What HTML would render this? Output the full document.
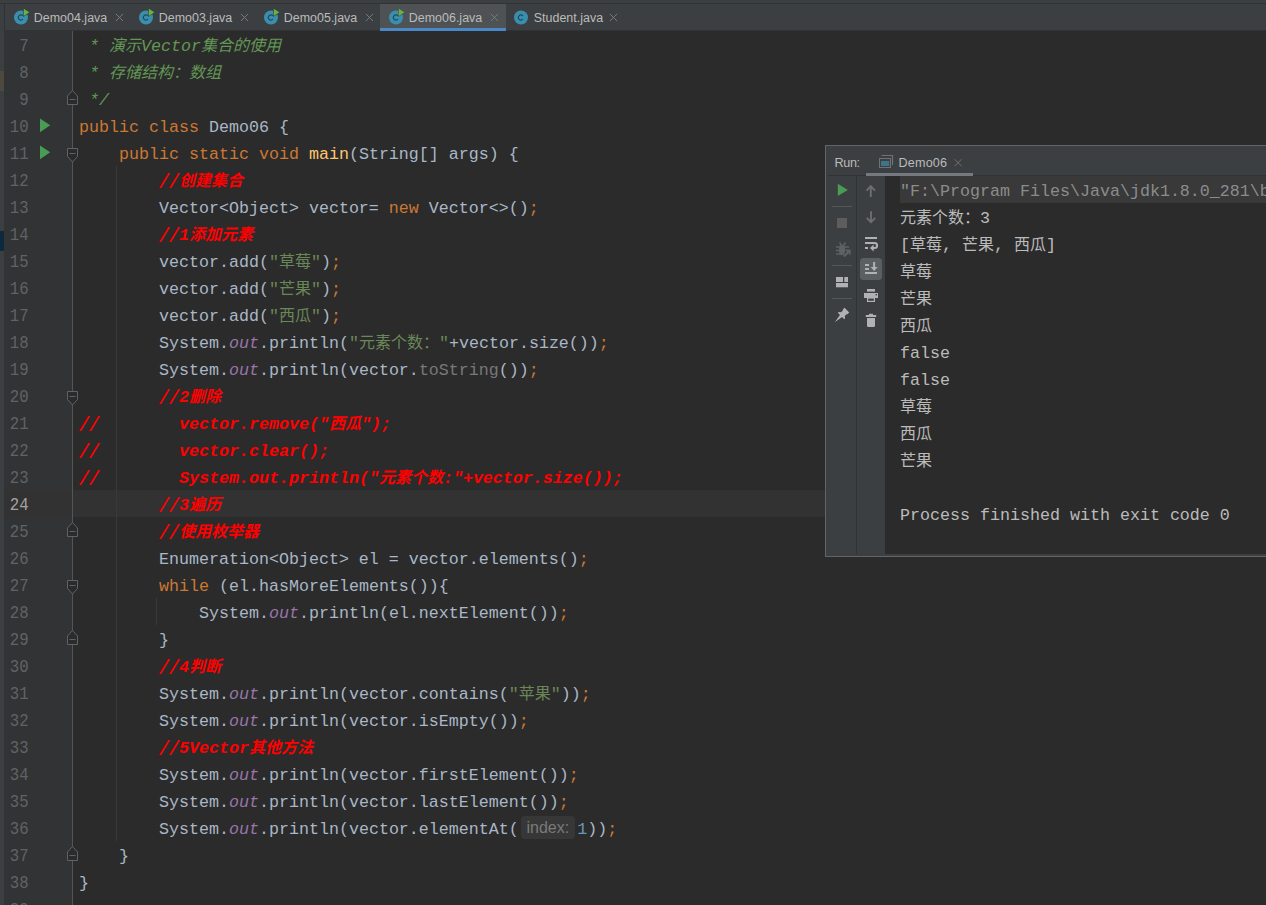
<!DOCTYPE html>
<html lang="zh-CN"><head><meta charset="utf-8"><title>Demo06.java</title>
<style>
html,body{margin:0;padding:0;}
body{width:1266px;height:905px;overflow:hidden;background:#2b2b2b;position:relative;font-family:"Liberation Sans",sans-serif;}
.abs{position:absolute;}
#topstrip{left:0;top:0;width:1266px;height:3px;background:#3c3f41;}
#topline{left:0;top:3px;width:1266px;height:1px;background:#323232;}
#tabbar{left:0;top:4px;width:1266px;height:26px;background:#3c3f41;}
#tabline{left:0;top:30px;width:1266px;height:1px;background:#313233;}
#leftstrip{left:0;top:4px;width:4px;height:901px;background:#3c3f41;}
#leftline{left:4px;top:4px;width:1px;height:26px;background:#2f3133;}
#gutter{left:4px;top:31px;width:68px;height:874px;background:#313335;}
#gsep{left:72px;top:31px;width:1px;height:874px;background:#555555;}
.tab{position:absolute;top:0;height:27px;font-size:12.45px;color:#bbbbbb;line-height:27px;white-space:nowrap;}
.tab .lbl{position:absolute;left:20.7px;top:0.5px;letter-spacing:0.03px;}
.tab svg.ico{position:absolute;left:0;top:4px;}
.tab .x{position:absolute;top:8px;width:10px;height:10px;}
.ln{position:absolute;left:0px;width:28.6px;text-align:right;height:27px;line-height:29px;font-family:"Liberation Mono",monospace;font-size:18.33px;letter-spacing:0px;color:#606366;transform:scaleX(0.855);transform-origin:100% 50%;}
.code{position:absolute;left:79px;height:27px;line-height:29px;font-family:"Liberation Mono",monospace;font-size:16.664px;letter-spacing:0;color:#a9b7c6;white-space:pre;}
.cj{font-family:"Liberation Mono","Noto Sans CJK SC",monospace;font-size:16px;letter-spacing:0;}
.k{color:#cc7832;}
.m{color:#ffc66d;}
.s{color:#6a8759;}
.dc{color:#629755;font-style:italic;}
.c{color:#ff0000;font-weight:bold;font-style:italic;}
.sf{color:#9876aa;font-style:italic;}
.sl{display:inline-block;transform:translateY(2px) scale(1,1.22);transform-origin:50% 60%;}
.n{color:#6897bb;}
.g{color:#787878;}
.hint{display:inline-block;box-sizing:border-box;font-family:"Liberation Sans",sans-serif;font-size:16px;letter-spacing:0;color:#7a7a7a;background:#373737;border-radius:4px;width:54px;height:23px;line-height:24px;text-align:center;margin:0 2.5px 0 2px;vertical-align:top;position:relative;top:1px;}
.guide{position:absolute;width:1px;background:#393939;}
#curline{left:5px;top:490px;width:1261px;height:27px;background:#323232;}
#run{left:825px;top:145px;width:441px;height:412px;background:#3c3f41;border:1px solid #646464;border-right:none;box-sizing:border-box;overflow:hidden;}
#con{position:absolute;left:59px;top:30px;width:382px;height:378px;background:#2b2b2b;overflow:hidden;}
.rl{font-size:12.6px;color:#bbbbbb;line-height:16px;white-space:nowrap;}
.cg{color:#8c8c8c;}
.con{position:absolute;left:15px;height:27px;line-height:31px;font-family:"Liberation Mono",monospace;font-size:16.664px;letter-spacing:0;color:#bbbbbb;white-space:pre;}
</style></head><body>

<div id="topstrip" class="abs"></div><div id="topline" class="abs"></div><div id="tabbar" class="abs">
<div class="tab" style="left:13px"><svg class="ico" width="18" height="18" viewBox="0 0 18 18"><circle cx="8" cy="9.5" r="7" fill="#3a8fae"/><path d="M9.9 11.2a2.6 2.6 0 1 1 0-3.4" fill="none" stroke="#25495a" stroke-width="1.25"/><path d="M10.8 0.7L16.3 4.3L10.8 7.9Z" fill="#62b543" stroke="#3c3f41" stroke-width="1.2" paint-order="stroke"/></svg><span class="lbl">Demo04.java</span><svg class="abs" style="left:102.2px;top:9px" width="9" height="9" viewBox="0 0 9 9"><path d="M0.9 0.9L8 8M8 0.9L0.9 8" stroke="#787b7d" stroke-width="1" fill="none"/></svg></div>
<div class="tab" style="left:138px"><svg class="ico" width="18" height="18" viewBox="0 0 18 18"><circle cx="8" cy="9.5" r="7" fill="#3a8fae"/><path d="M9.9 11.2a2.6 2.6 0 1 1 0-3.4" fill="none" stroke="#25495a" stroke-width="1.25"/><path d="M10.8 0.7L16.3 4.3L10.8 7.9Z" fill="#62b543" stroke="#3c3f41" stroke-width="1.2" paint-order="stroke"/></svg><span class="lbl">Demo03.java</span><svg class="abs" style="left:102.2px;top:9px" width="9" height="9" viewBox="0 0 9 9"><path d="M0.9 0.9L8 8M8 0.9L0.9 8" stroke="#787b7d" stroke-width="1" fill="none"/></svg></div>
<div class="tab" style="left:263px"><svg class="ico" width="18" height="18" viewBox="0 0 18 18"><circle cx="8" cy="9.5" r="7" fill="#3a8fae"/><path d="M9.9 11.2a2.6 2.6 0 1 1 0-3.4" fill="none" stroke="#25495a" stroke-width="1.25"/><path d="M10.8 0.7L16.3 4.3L10.8 7.9Z" fill="#62b543" stroke="#3c3f41" stroke-width="1.2" paint-order="stroke"/></svg><span class="lbl">Demo05.java</span><svg class="abs" style="left:102.2px;top:9px" width="9" height="9" viewBox="0 0 9 9"><path d="M0.9 0.9L8 8M8 0.9L0.9 8" stroke="#787b7d" stroke-width="1" fill="none"/></svg></div>
<div class="abs" style="left:380px;top:0;width:126px;height:26px;background:#4e5254"></div>
<div class="tab" style="left:388px"><svg class="ico" width="18" height="18" viewBox="0 0 18 18"><circle cx="8" cy="9.5" r="7" fill="#3a8fae"/><path d="M9.9 11.2a2.6 2.6 0 1 1 0-3.4" fill="none" stroke="#25495a" stroke-width="1.25"/><path d="M10.8 0.7L16.3 4.3L10.8 7.9Z" fill="#62b543" stroke="#4e5254" stroke-width="1.2" paint-order="stroke"/></svg><span class="lbl">Demo06.java</span><svg class="abs" style="left:102.2px;top:9px" width="9" height="9" viewBox="0 0 9 9"><path d="M0.9 0.9L8 8M8 0.9L0.9 8" stroke="#787b7d" stroke-width="1" fill="none"/></svg></div>
<div class="tab" style="left:513px"><svg class="ico" width="18" height="18" viewBox="0 0 18 18"><circle cx="8" cy="9.5" r="7" fill="#3a8fae"/><path d="M9.9 11.2a2.6 2.6 0 1 1 0-3.4" fill="none" stroke="#25495a" stroke-width="1.25"/></svg><span class="lbl">Student.java</span><svg class="abs" style="left:96.3px;top:9px" width="9" height="9" viewBox="0 0 9 9"><path d="M0.9 0.9L8 8M8 0.9L0.9 8" stroke="#787b7d" stroke-width="1" fill="none"/></svg></div>
</div>
<div id="tabline" class="abs"></div><div id="leftstrip" class="abs"></div><div id="leftline" class="abs"></div><div class="abs" style="left:380px;top:28px;width:126px;height:3px;background:#4a88c7"></div>
<div class="abs" style="left:0;top:71px;width:4px;height:20px;background:#4e493e"></div>
<div class="abs" style="left:0;top:231px;width:4px;height:20px;background:#0d293e"></div>
<div id="gutter" class="abs"></div>
<div id="curline" class="abs"></div>
<div id="gsep" class="abs"></div>
<div class="guide" style="left:116px;top:166px;height:675px"></div>
<div class="guide" style="left:156px;top:598px;height:27px"></div>
<div class="ln" style="top:32px">7</div>
<div class="code" style="top:32px"><span class="dc"> * <span class="cj">演示</span>Vector<span class="cj">集合的使用</span></span></div>
<div class="ln" style="top:59px">8</div>
<div class="code" style="top:59px"><span class="dc"> * <span class="cj">存储结构：数组</span></span></div>
<div class="ln" style="top:86px">9</div>
<div class="code" style="top:86px"><span class="dc"> */</span></div>
<div class="ln" style="top:113px">10</div>
<div class="code" style="top:113px"><span class="k">public class </span>Demo06 {</div>
<div class="ln" style="top:140px">11</div>
<div class="code" style="top:140px">    <span class="k">public static void </span><span class="m">main</span>(String[] args) {</div>
<div class="ln" style="top:167px">12</div>
<div class="code" style="top:167px">        <span class="c"><span class="sl">//</span><span class="cj">创建集合</span></span></div>
<div class="ln" style="top:194px">13</div>
<div class="code" style="top:194px">        Vector&lt;Object&gt; vector= <span class="k">new </span>Vector&lt;&gt;()<span class="k">;</span></div>
<div class="ln" style="top:221px">14</div>
<div class="code" style="top:221px">        <span class="c"><span class="sl">//</span>1<span class="cj">添加元素</span></span></div>
<div class="ln" style="top:248px">15</div>
<div class="code" style="top:248px">        vector.add(<span class="s">"<span class="cj">草莓</span>"</span>)<span class="k">;</span></div>
<div class="ln" style="top:275px">16</div>
<div class="code" style="top:275px">        vector.add(<span class="s">"<span class="cj">芒果</span>"</span>)<span class="k">;</span></div>
<div class="ln" style="top:302px">17</div>
<div class="code" style="top:302px">        vector.add(<span class="s">"<span class="cj">西瓜</span>"</span>)<span class="k">;</span></div>
<div class="ln" style="top:329px">18</div>
<div class="code" style="top:329px">        System.<span class="sf">out</span>.println(<span class="s">"<span class="cj">元素个数：</span>"</span>+vector.size())<span class="k">;</span></div>
<div class="ln" style="top:356px">19</div>
<div class="code" style="top:356px">        System.<span class="sf">out</span>.println(vector.<span class="g">toString</span>())<span class="k">;</span></div>
<div class="ln" style="top:383px">20</div>
<div class="code" style="top:383px">        <span class="c"><span class="sl">//</span>2<span class="cj">删除</span></span></div>
<div class="ln" style="top:410px">21</div>
<div class="code" style="top:410px"><span class="c"><span class="sl">//</span>        vector.remove("<span class="cj">西瓜</span>");</span></div>
<div class="ln" style="top:437px">22</div>
<div class="code" style="top:437px"><span class="c"><span class="sl">//</span>        vector.clear();</span></div>
<div class="ln" style="top:464px">23</div>
<div class="code" style="top:464px"><span class="c"><span class="sl">//</span>        System.out.println("<span class="cj">元素个数</span>:"+vector.size());</span></div>
<div class="ln" style="top:491px;color:#a4a3a3">24</div>
<div class="code" style="top:491px">        <span class="c"><span class="sl">//</span>3<span class="cj">遍历</span></span></div>
<div class="ln" style="top:518px">25</div>
<div class="code" style="top:518px">        <span class="c"><span class="sl">//</span><span class="cj">使用枚举器</span></span></div>
<div class="ln" style="top:545px">26</div>
<div class="code" style="top:545px">        Enumeration&lt;Object&gt; el = vector.elements()<span class="k">;</span></div>
<div class="ln" style="top:572px">27</div>
<div class="code" style="top:572px">        <span class="k">while </span>(el.hasMoreElements()){</div>
<div class="ln" style="top:599px">28</div>
<div class="code" style="top:599px">            System.<span class="sf">out</span>.println(el.nextElement())<span class="k">;</span></div>
<div class="ln" style="top:626px">29</div>
<div class="code" style="top:626px">        }</div>
<div class="ln" style="top:653px">30</div>
<div class="code" style="top:653px">        <span class="c"><span class="sl">//</span>4<span class="cj">判断</span></span></div>
<div class="ln" style="top:680px">31</div>
<div class="code" style="top:680px">        System.<span class="sf">out</span>.println(vector.contains(<span class="s">"<span class="cj">苹果</span>"</span>))<span class="k">;</span></div>
<div class="ln" style="top:707px">32</div>
<div class="code" style="top:707px">        System.<span class="sf">out</span>.println(vector.isEmpty())<span class="k">;</span></div>
<div class="ln" style="top:734px">33</div>
<div class="code" style="top:734px">        <span class="c"><span class="sl">//</span>5Vector<span class="cj">其他方法</span></span></div>
<div class="ln" style="top:761px">34</div>
<div class="code" style="top:761px">        System.<span class="sf">out</span>.println(vector.firstElement())<span class="k">;</span></div>
<div class="ln" style="top:788px">35</div>
<div class="code" style="top:788px">        System.<span class="sf">out</span>.println(vector.lastElement())<span class="k">;</span></div>
<div class="ln" style="top:815px">36</div>
<div class="code" style="top:815px">        System.<span class="sf">out</span>.println(vector.elementAt(<span class="hint">index:</span><span class="n">1</span>))<span class="k">;</span></div>
<div class="ln" style="top:842px">37</div>
<div class="code" style="top:842px">    }</div>
<div class="ln" style="top:869px">38</div>
<div class="code" style="top:869px">}</div>
<svg class="abs" style="left:0;top:0" width="90" height="905" viewBox="0 0 90 905"><path d="M67.5 148.5H77.5V156.5L72.5 162.0L67.5 156.5Z" fill="#2b2b2b" stroke="#606366" stroke-width="1"/><path d="M69.5 153.5H75.5" stroke="#606366" stroke-width="1" fill="none"/><path d="M67.5 391.5H77.5V399.5L72.5 405.0L67.5 399.5Z" fill="#2b2b2b" stroke="#606366" stroke-width="1"/><path d="M69.5 396.5H75.5" stroke="#606366" stroke-width="1" fill="none"/><path d="M67.5 580.5H77.5V588.5L72.5 594.0L67.5 588.5Z" fill="#2b2b2b" stroke="#606366" stroke-width="1"/><path d="M69.5 585.5H75.5" stroke="#606366" stroke-width="1" fill="none"/><path d="M72.5 90.5L77.5 96.0V104.5H67.5V96.0Z" fill="#2b2b2b" stroke="#606366" stroke-width="1"/><path d="M69.5 99.5H75.5" stroke="#606366" stroke-width="1" fill="none"/><path d="M72.5 522.5L77.5 528.0V536.5H67.5V528.0Z" fill="#2b2b2b" stroke="#606366" stroke-width="1"/><path d="M69.5 531.5H75.5" stroke="#606366" stroke-width="1" fill="none"/><path d="M72.5 630.5L77.5 636.0V644.5H67.5V636.0Z" fill="#2b2b2b" stroke="#606366" stroke-width="1"/><path d="M69.5 639.5H75.5" stroke="#606366" stroke-width="1" fill="none"/><path d="M72.5 846.5L77.5 852.0V860.5H67.5V852.0Z" fill="#2b2b2b" stroke="#606366" stroke-width="1"/><path d="M69.5 855.5H75.5" stroke="#606366" stroke-width="1" fill="none"/><path d="M40 118.4L50.2 125.3L40 132.2Z" fill="#499c54"/><path d="M40 145.4L50.2 152.3L40 159.2Z" fill="#499c54"/></svg>
<div class="ln" style="top:896px">39</div>
<div id="run" class="abs">
<div class="abs" style="left:2px;top:29px;width:440px;height:1px;background:#323232"></div>
<div class="abs" style="left:40px;top:27px;width:107px;height:3px;background:#747a80"></div>
<div class="abs rl" style="left:8.6px;top:9px;letter-spacing:-0.4px">Run:</div>
<div class="abs rl" style="left:72.6px;top:9px;letter-spacing:0.15px">Demo06</div>
<div class="abs" style="left:30px;top:30px;width:1px;height:378px;background:#323232"></div>
<svg class="abs" style="left:0;top:0" width="160" height="410" viewBox="0 0 160 410"><path d="M55.5 9.5H66.5V19" fill="none" stroke="#6e7275" stroke-width="1.2"/><rect x="53.5" y="12.5" width="11" height="9" fill="#3c3f41" stroke="#6e7275" stroke-width="1"/><rect x="55" y="15" width="8.2" height="5" fill="#3e7389"/><path d="M128.6 13.2L135.6 20.2M135.6 13.2L128.6 20.2" stroke="#6e6e6e" stroke-width="1" fill="none"/><path d="M11.8 37.7L21.8 43.9L11.8 50.1Z" fill="#499c54"/><rect x="6" y="60" width="20" height="1" fill="#555859"/><rect x="6" y="119" width="20" height="1" fill="#555859"/><rect x="6" y="152" width="20" height="1" fill="#555859"/><rect x="11" y="72" width="10" height="10" fill="#5d5d5d"/><g fill="none" stroke="#5e6163" stroke-width="1.6"><path d="M13.5 96.5L15.5 99.5M19.5 96.5L17.5 99.5"/><path d="M10 101H23M10 104.5H15M10 108H15"/></g><ellipse cx="16" cy="104" rx="3.2" ry="5.2" fill="#5e6163"/><path d="M17.8 110.6L22.5 105.8" stroke="#5e6163" stroke-width="2.2" fill="none"/><path d="M18.6 103.6H24.6V109.6Z" fill="#5e6163"/><rect x="10" y="131" width="7" height="5" fill="#afb1b3"/><rect x="18.3" y="131" width="3.7" height="5" fill="#afb1b3"/><rect x="10" y="137" width="12" height="4.3" fill="#afb1b3"/><g transform="translate(16 169) rotate(45)"><path d="M-3.3 -6.9H3.3V-4.5L2.6 -3.8V-1.3L4.5 0.2V1.4H1.5L0 10.2L-1.5 1.4H-4.5V0.2L-2.6 -1.3V-3.8L-3.3 -4.5Z" fill="#afb1b3"/></g><path d="M44.8 51V40.5M40.6 44.6L44.8 40.2L49 44.6" fill="none" stroke="#6e6e6e" stroke-width="1.9"/><path d="M45 65.2V75.8M40.8 71.8L45 76.2L49.2 71.8" fill="none" stroke="#6e6e6e" stroke-width="1.9"/><rect x="39" y="91" width="12" height="2" fill="#afb1b3"/><rect x="39" y="101" width="3" height="2" fill="#afb1b3"/><path d="M39 97H48.6a2.5 2.5 0 0 1 0 5H47" fill="none" stroke="#afb1b3" stroke-width="2"/><path d="M44 102L47.6 98.6V105.4Z" fill="#afb1b3"/><rect x="34" y="112" width="22" height="22" rx="3.5" fill="#5a5f62"/><rect x="39" y="118" width="4" height="2" fill="#afb1b3"/><rect x="39" y="122" width="4" height="2" fill="#afb1b3"/><rect x="39" y="126" width="12" height="2" fill="#afb1b3"/><rect x="47.1" y="116" width="2" height="6" fill="#afb1b3"/><path d="M44.6 121H51.6L48.1 125Z" fill="#afb1b3"/><rect x="41" y="143" width="8" height="2.6" fill="#afb1b3"/><rect x="38" y="147" width="14" height="5" fill="#afb1b3"/><rect x="41.6" y="152" width="6.8" height="3.4" fill="none" stroke="#afb1b3" stroke-width="1.2"/><rect x="49.6" y="148" width="1.4" height="1.4" fill="#3c3f41"/><rect x="43" y="167.8" width="4" height="1.4" fill="#afb1b3"/><rect x="39.8" y="169" width="10.4" height="2" fill="#afb1b3"/><path d="M41 172H49V179.5a1.5 1.5 0 0 1 -1.5 1.5H42.5a1.5 1.5 0 0 1 -1.5 -1.5Z" fill="#afb1b3"/></svg>
<div id="con">
<div class="abs" style="left:15px;top:0;width:400px;height:27px;background:#393939"></div>
<div class="con" style="top:0px"><span class="cg">"F:\Program Files\Java\jdk1.8.0_281\bin\java.exe" ...</span></div>
<div class="con" style="top:27px"><span class="cj">元素个数：</span>3</div>
<div class="con" style="top:54px">[<span class="cj">草莓</span>, <span class="cj">芒果</span>, <span class="cj">西瓜</span>]</div>
<div class="con" style="top:81px"><span class="cj">草莓</span></div>
<div class="con" style="top:108px"><span class="cj">芒果</span></div>
<div class="con" style="top:135px"><span class="cj">西瓜</span></div>
<div class="con" style="top:162px">false</div>
<div class="con" style="top:189px">false</div>
<div class="con" style="top:216px"><span class="cj">草莓</span></div>
<div class="con" style="top:243px"><span class="cj">西瓜</span></div>
<div class="con" style="top:270px"><span class="cj">芒果</span></div>
<div class="con" style="top:324px">Process finished with exit code 0</div>
</div>
</div>
</body></html>
